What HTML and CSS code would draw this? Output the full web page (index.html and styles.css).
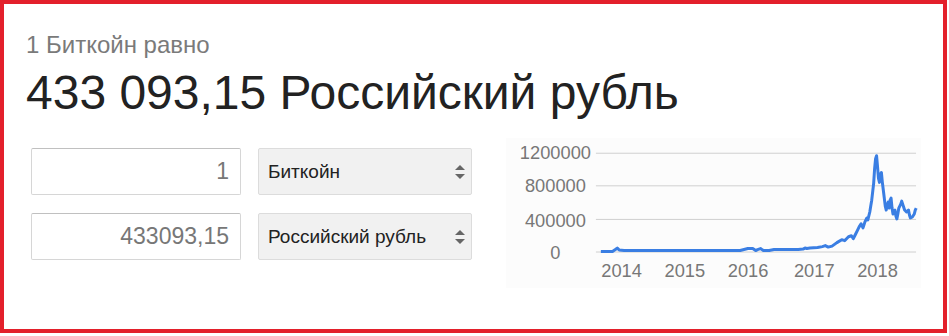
FILE: index.html
```html
<!DOCTYPE html>
<html lang="ru">
<head>
<meta charset="UTF-8" />
<title>1 Биткойн равно</title>
<link rel="stylesheet" href="styles.css">
</head>
<body>
  <div class="card">
    <div class="label">1 Биткойн равно</div>
    <div class="result">433 093,15 Российский рубль</div>

    <div class="content">
      <div class="converter">
        <div class="amount">1</div>
        <div class="currency">Биткойн<span class="arrows"></span></div>
        <div class="amount">433093,15</div>
        <div class="currency">Российский рубль<span class="arrows"></span></div>
      </div>

      <svg class="chart" width="420" height="150" viewBox="0 0 420 150">
        <g class="grid">
          <line x1="91" y1="14.5" x2="415" y2="14.5" />
          <line x1="91" y1="47.5" x2="415" y2="47.5" />
          <line x1="91" y1="81.5" x2="415" y2="81.5" />
          <line x1="91" y1="114.5" x2="415" y2="114.5" />
        </g>
        <g class="ylabels">
          <text x="50" y="20">1200000</text>
          <text x="50" y="54">800000</text>
          <text x="50" y="89">400000</text>
          <text x="50" y="122">0</text>
        </g>
        <g class="xlabels">
          <text x="117" y="140">2014</text>
          <text x="181" y="140">2015</text>
          <text x="245" y="140">2016</text>
          <text x="312" y="140">2017</text>
          <text x="376" y="140">2018</text>
        </g>
        <!-- price line, squeezed so it ends where the grid ends -->
        <path class="line" transform="matrix(0.979 0 0 1 2.02 0)" d="M96 114 L108 114 L111 112 L113 110.5 L115 112.5 L120 113 L240 113 L244 112 L248 111 L253 111 L256 113 L258 112 L261 111 L264 113 L270 113 L275 112 L292 112 L300 112 L305 111.5 L307 110.5 L309 111 L312 110.5 L320 110 L325 109 L328 108 L331 109.5 L335 108.5 L340 105 L345 102 L348 103 L350 101 L352 99 L355 98 L357 101 L359 97 L361 93 L363 89 L365 86 L367 90 L369 84 L371 80 L372 82 L374 74 L375 68 L376 62 L378 45 L379 30 L380 20 L381 17 L382 28 L383 40 L384 44 L385 36 L386 34 L387 44 L388 52 L389 60 L390 68 L391 72 L392 67 L393 64 L394 70 L395 62 L396 60 L397 70 L398 76 L399 73 L400 72 L401 78 L402 81 L403 76 L404 70 L406 66 L407 63 L408 66 L410 72 L412 74 L414 72 L415 77 L416 80 L418 79 L420 76 L421 72 L422 70" />
      </svg>
    </div>
  </div>
</body>
</html>
```

FILE: styles.css
```css
body {
  margin: 0;
  font-family: "Liberation Sans", Arial, sans-serif;
  background: #fff;
}

.card {
  width: 947px;
  height: 333px;
  box-sizing: border-box;
  border: 4px solid #e3202b;
  padding: 27px 22px 0 22px;
}

.label {
  color: #7a7a7a;
  font-size: 24px;
  line-height: 28px;
}

.result {
  color: #222;
  font-size: 48px;
  line-height: 58px;
  margin-top: 5px;
}

.content {
  display: flex;
  align-items: flex-start;
  margin-top: 16px;
}

.converter {
  display: grid;
  grid-template-columns: 210px 214px;
  column-gap: 17px;
  row-gap: 18px;
  margin-top: 10px;
  margin-left: 5px;
}

.amount {
  height: 47px;
  box-sizing: border-box;
  border: 1px solid #d6d6d6;
  border-top-color: #c0c0c0;
  border-radius: 2px;
  text-align: right;
  padding-right: 11px;
  font-size: 23px;
  line-height: 45px;
  color: #777;
}

.currency {
  position: relative;
  height: 47px;
  box-sizing: border-box;
  border: 1px solid #dcdcdc;
  border-radius: 2px;
  background: #f1f1f1;
  padding-left: 9px;
  font-size: 19px;
  line-height: 45px;
  color: #222;
}

/* up/down triangles of the select */
.arrows {
  position: absolute;
  right: 6px;
  top: 16px;
  width: 0;
  height: 0;
  border-left: 5px solid transparent;
  border-right: 5px solid transparent;
  border-bottom: 5px solid #666;
}

.arrows::after {
  content: "";
  position: absolute;
  left: -5px;
  top: 9px;
  border-left: 5px solid transparent;
  border-right: 5px solid transparent;
  border-top: 5px solid #666;
}

.chart {
  margin-left: 34px;
  background: #fcfcfc;
}

.grid line {
  stroke: #cfcfcf;
  stroke-width: 1;
}

.chart text {
  font-family: "Liberation Sans", Arial, sans-serif;
  font-size: 18.5px;
  fill: #777;
  text-anchor: middle;
}

.line {
  fill: none;
  stroke: #3a7ee3;
  stroke-width: 3;
  stroke-linejoin: round;
  vector-effect: non-scaling-stroke;
}
```
